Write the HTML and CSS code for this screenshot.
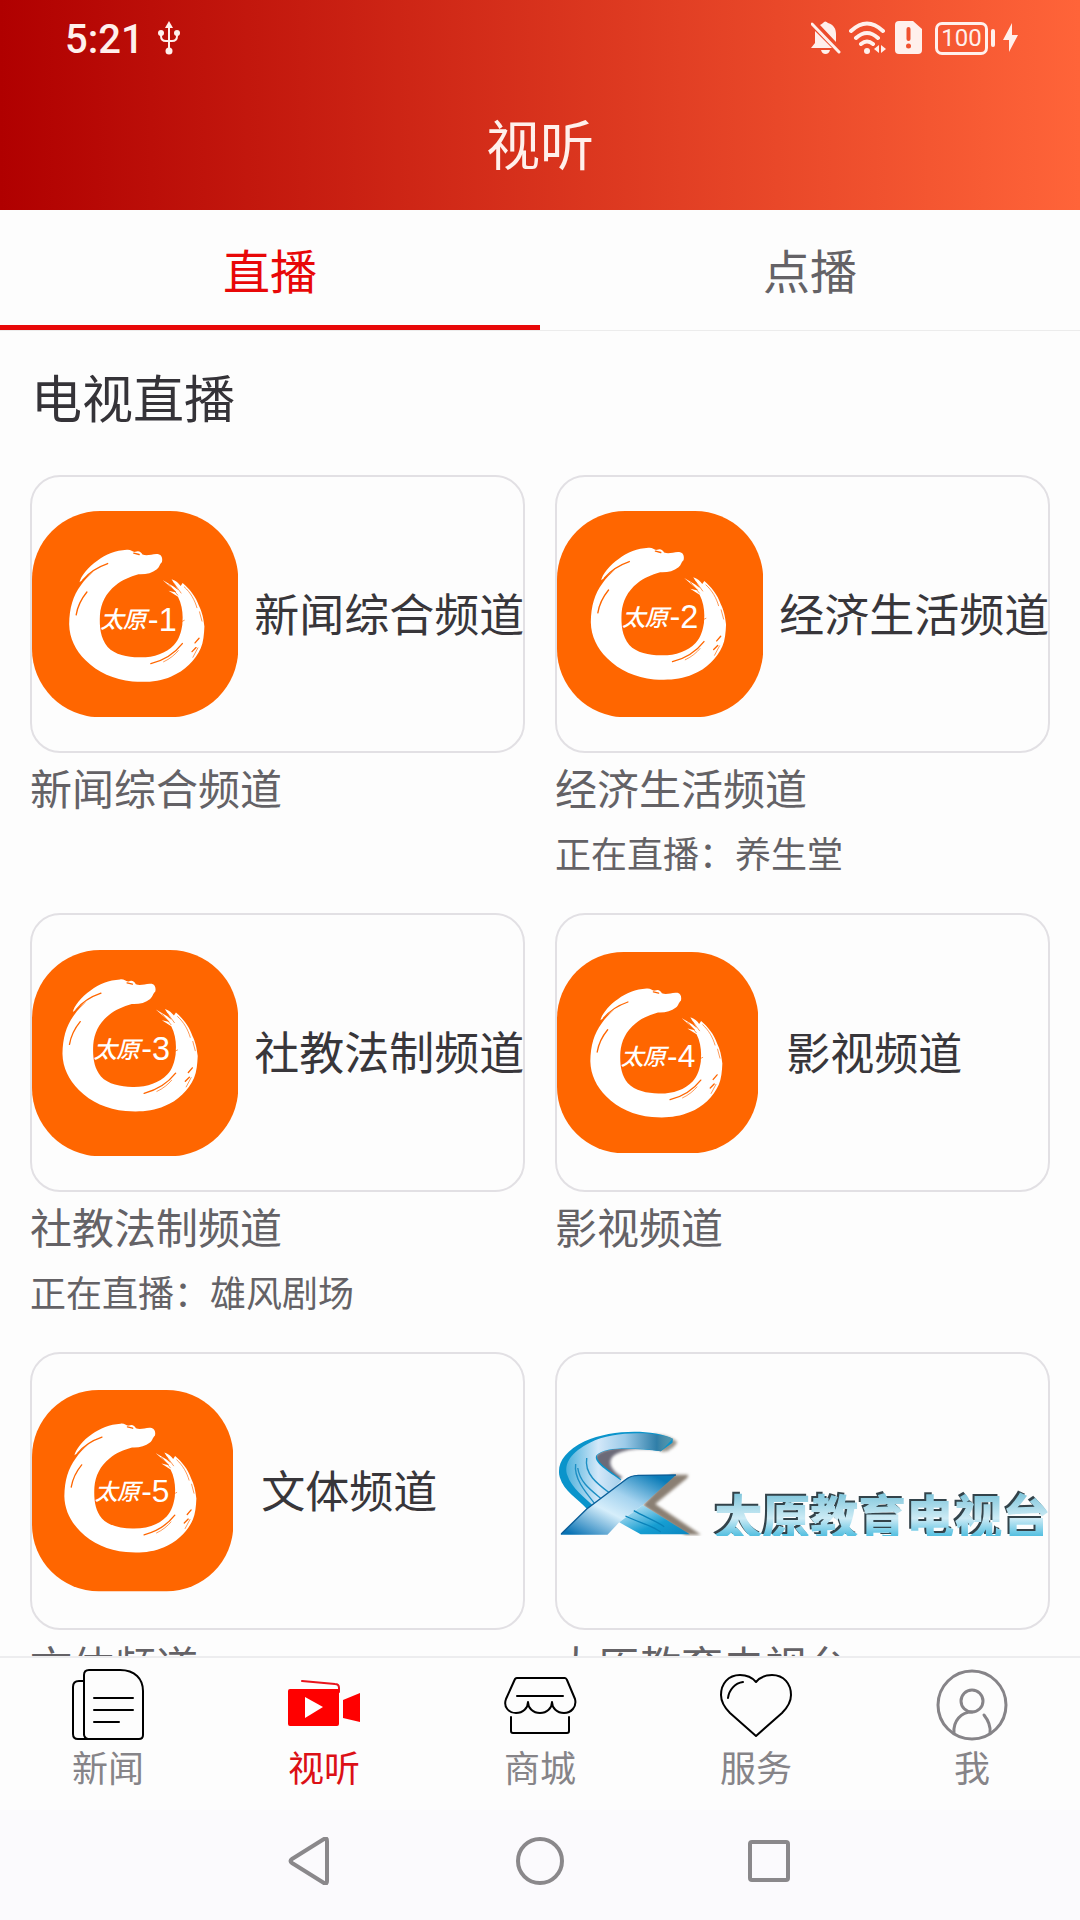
FILE: index.html
```html
<!DOCTYPE html>
<html lang="zh-CN">
<head>
    <meta charset="UTF-8">
    <meta name="viewport" content="width=device-width, initial-scale=1.0">
    <title>视听</title>
    <link rel="stylesheet" href="styles.css">
</head>
<body>
    <!-- Shared dragon ring for the channel logos -->
    <svg class="defs" aria-hidden="true">
        <symbol id="ring" viewBox="0 0 616 616" overflow="visible">
            <path fill="#fff" d="M283 116 C296 114 300 124 309 122 C318 117 326 122 330 130 C346 137 360 126 378 129 C388 131 391 143 388 153 C380 160 382 166 373 174 C358 186 340 190 318 189 C292 197 270 205 250 222 C220 246 206 276 203 310 C201 345 204 380 226 406 C248 430 290 438 325 437 C365 437 400 425 424 400 C440 384 446 360 449 340 L450 318 C450 298 446 275 436 256 L408 238 C420 240 428 244 431 242 L390 206 L424 226 L437 237 L417 204 C430 208 438 216 444 224 L450 215 C470 232 490 256 499 284 C508 302 512 320 515 345 C514 368 512 392 504 410 C488 446 456 478 416 494 C380 510 340 512 300 509 C244 504 196 482 160 446 C130 416 112 380 111 338 C112 290 122 254 146 222 C156 206 170 194 184 180 L142 213 C144 198 168 166 196 148 C220 130 250 118 283 116 Z"/>
            <path fill="none" stroke="#f60" stroke-width="4" stroke-linecap="round" d="M226 157 C200 166 170 184 152 206 M164 242 C146 264 136 286 132 310 M355 456 C394 446 424 428 449 396 M487 394 L499 380 M478 420 L490 408 M304 126 L320 130"/>
            <path fill="none" stroke="#f60" stroke-width="2" d="M392 451 C412 442 428 428 438 416 M408 218 L436 252 M424 216 L446 246 M454 226 C474 244 486 266 493 290 M500 300 L508 330 M480 438 L496 408 M444 332 L456 326"/>
        </symbol>
        <linearGradient id="blueC" x1="0" x2="1">
            <stop offset="0" stop-color="#4fb2dc"/>
            <stop offset="0.3" stop-color="#d3e8f9"/>
            <stop offset="0.55" stop-color="#9ccbe9"/>
            <stop offset="0.85" stop-color="#2f7ea8"/>
            <stop offset="1" stop-color="#8d9c98" stop-opacity="0.5"/>
        </linearGradient>
        <linearGradient id="blueX" x1="0" y1="1" x2="1" y2="0">
            <stop offset="0.05" stop-color="#0872b4"/>
            <stop offset="0.4" stop-color="#d6eefb"/>
            <stop offset="0.6" stop-color="#a5d3ef"/>
            <stop offset="0.9" stop-color="#0b7cb8"/>
        </linearGradient>
        <linearGradient id="blueLeg" x1="0" y1="0" x2="1" y2="1">
            <stop offset="0" stop-color="#e0f2fc"/>
            <stop offset="0.6" stop-color="#169ed2"/>
            <stop offset="1" stop-color="#0a86c0"/>
        </linearGradient>
    </svg>

    <header class="header">
        <div class="status-bar">
            <span class="time">5:21</span>
            <svg class="usb" width="22" height="34" viewBox="0 0 22 34" fill="none" stroke="currentColor" stroke-width="2">
                <path d="M11 4v26M3 12v3q0 5 5 5h6q5 0 5-5v-3"/>
                <path d="M11 0l4 7H7z" fill="currentColor" stroke="none"/>
                <circle cx="3" cy="12" r="3" fill="currentColor" stroke="none"/>
                <circle cx="19" cy="12" r="3" fill="currentColor" stroke="none"/>
                <circle cx="11" cy="30" r="3.5" fill="currentColor" stroke="none"/>
            </svg>
            <div class="status-icons">
                <svg width="30" height="34" viewBox="0 0 30 34" fill="currentColor">
                    <path d="M9 4q2-1 3-2 2-3 5 0c6 2 8 6 8 11v8zM4 10l17 17H0l4-5zM10 29h9q-1 4-4.500 4T10 29z"/>
                    <path d="M1 3l27 28" fill="none" stroke="currentColor" stroke-width="3" stroke-linecap="round"/>
                </svg>
                <svg width="38" height="34" viewBox="0 0 38 34" fill="currentColor">
                    <path d="M2 10q16-15 32 0M7 17q11-10 22 0M12 23q6-5 12 0" fill="none" stroke="currentColor" stroke-width="4" stroke-linecap="round"/>
                    <circle cx="18" cy="30" r="3"/>
                    <path d="M30 24v8l-5-4zM32 24v8l5-4z"/>
                </svg>
                <svg width="28" height="34" viewBox="0 0 28 34">
                    <path d="M4 0h14l9 8v21q0 4-4 4H4q-4 0-4-4V4q0-4 4-4z" fill="currentColor"/>
                    <path d="M13.500 8v10" stroke="#f0512f" stroke-width="4" stroke-linecap="round"/>
                    <circle cx="13.500" cy="25" r="2.500" fill="#f0512f"/>
                </svg>
                <span class="battery"><span class="battery-level">100</span></span>
                <svg width="16" height="30" viewBox="0 0 16 30" fill="currentColor">
                    <path d="M9 0v12h6L6 29V17H0z"/>
                </svg>
            </div>
        </div>
        <h1 class="page-title">视听</h1>
    </header>

    <div class="tabs" role="tablist">
        <button class="tab active" role="tab" aria-selected="true">直播</button>
        <button class="tab" role="tab" aria-selected="false">点播</button>
    </div>

    <main class="content">
        <h2 class="section-title">电视直播</h2>
        <div class="channels">
            <a class="channel" href="#">
                <div class="cover">
                    <svg class="logo" viewBox="0 0 616 616">
                        <rect width="616" height="616" rx="204" fill="#f60"/>
                        <g>
                            <use href="#ring" width="616" height="616"/>
                            <text class="logo-city" y="350"><tspan x="204">太</tspan><tspan x="272">原</tspan></text>
                            <text class="logo-number" x="346" y="357">-1</text>
                        </g>
                    </svg>
                    <span class="cover-name">新闻综合频道</span>
                </div>
                <h3 class="name">新闻综合频道</h3>
            </a>
            <a class="channel" href="#">
                <div class="cover">
                    <svg class="logo" viewBox="0 0 616 616">
                        <rect width="616" height="616" rx="204" fill="#f60"/>
                        <g transform="translate(-10 -6)">
                            <use href="#ring" width="616" height="616"/>
                            <text class="logo-city" y="350"><tspan x="204">太</tspan><tspan x="272">原</tspan></text>
                            <text class="logo-number" x="346" y="357">-2</text>
                        </g>
                    </svg>
                    <span class="cover-name">经济生活频道</span>
                </div>
                <h3 class="name">经济生活频道</h3>
                <p class="playing">正在直播：养生堂</p>
            </a>
            <a class="channel" href="#">
                <div class="cover">
                    <svg class="logo" viewBox="0 0 616 616">
                        <rect width="616" height="616" rx="204" fill="#f60"/>
                        <g transform="translate(-20 -28)">
                            <use href="#ring" width="616" height="616"/>
                            <text class="logo-city" y="350"><tspan x="204">太</tspan><tspan x="272">原</tspan></text>
                            <text class="logo-number" x="346" y="357">-3</text>
                        </g>
                    </svg>
                    <span class="cover-name">社教法制频道</span>
                </div>
                <h3 class="name">社教法制频道</h3>
                <p class="playing">正在直播：雄风剧场</p>
            </a>
            <a class="channel" href="#">
                <div class="cover cover-short">
                    <svg class="logo" viewBox="0 0 616 616">
                        <rect width="616" height="616" rx="204" fill="#f60"/>
                        <g transform="translate(-9 -4)">
                            <use href="#ring" width="616" height="616"/>
                            <text class="logo-city" y="350"><tspan x="204">太</tspan><tspan x="272">原</tspan></text>
                            <text class="logo-number" x="346" y="357">-4</text>
                        </g>
                    </svg>
                    <span class="cover-name">影视频道</span>
                </div>
                <h3 class="name">影视频道</h3>
            </a>
            <a class="channel" href="#">
                <div class="cover cover-short">
                    <svg class="logo" viewBox="0 0 616 616">
                        <rect width="616" height="616" rx="204" fill="#f60"/>
                        <g transform="translate(-12 -13)">
                            <use href="#ring" width="616" height="616"/>
                            <text class="logo-city" y="350"><tspan x="204">太</tspan><tspan x="272">原</tspan></text>
                            <text class="logo-number" x="346" y="357">-5</text>
                        </g>
                    </svg>
                    <span class="cover-name">文体频道</span>
                </div>
                <h3 class="name">文体频道</h3>
            </a>
            <a class="channel" href="#">
                <div class="cover cover-edu">
                    <svg class="logo-edu" viewBox="50 266 426 318" preserveAspectRatio="none">
                        <g class="soft">
                            <path fill="#6b6a78" d="M372 330 C300 316 240 322 212 345 C194 365 210 390 240 408 L214 424 C180 392 150 360 164 340 C190 316 260 310 372 324z"/>
                            <path fill="#8a7f73" d="M380 400h48q4 6-6 14l-88 74 132 92h-44L298 492z"/>
                            <path fill="#9a958c" d="M330 278q50 6 68 24-8 20-40 30l-20-8z"/>
                        </g>
                        <path fill="#0a94cb" d="M385 292 C330 264 210 262 130 300 C70 330 48 370 58 408 C70 450 110 472 136 502 L160 498 L236 414 C210 392 160 360 166 342 C190 316 280 320 350 330 L384 304z"/>
                        <path fill="url(#blueC)" d="M385 292 C330 270 215 268 145 304 C92 332 68 366 80 402 C92 440 130 470 160 498 L236 418 C200 392 152 362 164 342 C190 314 280 318 350 330z"/>
                        <path fill="none" stroke="#1c8fc4" stroke-width="4" d="M104 368 C98 410 130 450 160 488 M136 350 C128 400 170 430 206 458 M110 380 C116 424 150 448 180 474"/>
                        <path fill="url(#blueX)" d="M60 580 L136 503 L250 414 Q262 403 285 402 L394 401 L298 491 L230 543 L196 580z"/>
                        <path fill="none" stroke="#0b5e98" stroke-width="4" d="M62 578 L136 503 L250 414 Q262 403 285 402 L394 401"/>
                        <path fill="url(#blueLeg)" d="M298 491 L434 579 H292 L230 543z"/>
                        <path fill="none" stroke="#0a83ba" stroke-width="4" d="M248 524 C290 545 320 550 350 572 M272 508 C300 525 340 540 360 556"/>
                    </svg>
                    <span class="edu-name">太原教育电视台</span>
                </div>
                <h3 class="name">太原教育电视台</h3>
            </a>
        </div>
    </main>

    <nav class="nav">
        <a class="nav-item" href="#">
            <svg class="nav-icon dark" viewBox="0 0 72 72">
                <path d="M12 67V7q0-5 5-5h31c15 0 23 9 23 21v44q0 4-4 4H6q-5 0-5-5V19q0-6 6-6h5M12 66q0 4 4 5M22 30h39M22 42h39M22 54h25"/>
            </svg>
            新闻
        </a>
        <a class="nav-item active" href="#">
            <svg class="nav-icon" viewBox="0 0 72 72">
                <path d="M14 13L47 16q4 0 4 4v4" stroke="#e8141c"/>
                <path d="M2 21h48q1 0 1 2v33q0 2-2 2H2q-2 0-2-2V23q0-2 2-2zM55 32l17-7v29l-17-4z" fill="#f00" stroke="none"/>
                <path d="M17 29l18 10-18 11z" fill="#fff" stroke="none"/>
            </svg>
            视听
        </a>
        <a class="nav-item" href="#">
            <svg class="nav-icon dark" viewBox="0 0 72 72">
                <path d="M13 10h48q1 0 2 2l8 19c2 8-4 14-11 14s-12-5-12-11c0 6-5 11-12 11s-12-5-12-11c0 6-5 11-12 11S-1 39 2 31l9-20q1-1 2-1zM13 28h46M7 49v14q0 2 2 2h54q2 0 2-2V49"/>
            </svg>
            商城
        </a>
        <a class="nav-item" href="#">
            <svg class="nav-icon dark" viewBox="0 0 72 72">
                <path d="M36 14C31 8 25 7 20 7 8 7 1 16 1 27c0 7 4 13 9 18l26 23 26-23c5-5 9-11 9-18C71 16 64 7 52 7c-5 0-11 1-16 7zM8 30c1-8 7-15 15-16"/>
            </svg>
            服务
        </a>
        <a class="nav-item" href="#">
            <svg class="nav-icon me" viewBox="0 0 72 72">
                <circle cx="36" cy="37" r="34"/>
                <circle cx="36" cy="33" r="11"/>
                <path d="M18 65C17 53 25 44 36 44M48 47c4 5 7 10 6 18"/>
            </svg>
            我
        </a>
    </nav>

    <footer class="system-bar">
        <button class="system-key" aria-label="返回">
            <svg width="48" height="48" viewBox="0 0 48 48"><path d="M38 2Q41 0 41 4v40q0 4-3 2L6 26q-3-2 0-4z"/></svg>
        </button>
        <button class="system-key" aria-label="主页">
            <svg width="48" height="48" viewBox="0 0 48 48"><circle cx="24" cy="24" r="22"/></svg>
        </button>
        <button class="system-key" aria-label="最近任务">
            <svg width="48" height="48" viewBox="0 0 48 48"><rect x="4" y="5" width="38" height="38" rx="2"/></svg>
        </button>
    </footer>
</body>
</html>
```
FILE: styles.css
```css
* {
    margin: 0;
    padding: 0;
    box-sizing: border-box;
}

body {
    display: flex;
    flex-direction: column;
    height: 100vh;
    font-family: "Noto Sans CJK SC", sans-serif;
    background: #fdfdfd;
    color: #646266;
    overflow: hidden;
}

a {
    color: inherit;
    text-decoration: none;
}

button {
    font: inherit;
    color: inherit;
    background: none;
    border: none;
    cursor: pointer;
}

svg {
    display: block;
    flex-shrink: 0;
}

.defs {
    position: absolute;
    width: 0;
    height: 0;
}

/* Header */
.header {
    flex-shrink: 0;
    background: linear-gradient(90deg, #b00000, #ff6439);
    color: #fff0ec;
}

.status-bar {
    display: flex;
    align-items: center;
    height: 76px;
    padding: 0 61px 0 65px;
}

.time {
    padding-top: 4px;
    font-family: Roboto, sans-serif;
    font-size: 40px;
    line-height: 48px;
    font-weight: 500;
}

.usb {
    margin-left: 14px;
}

.status-icons {
    display: flex;
    align-items: center;
    gap: 8px;
    margin-left: auto;
}

.battery {
    display: flex;
    align-items: center;
    gap: 3px;
    margin-left: 4px;
}

.battery::after {
    content: "";
    width: 4px;
    height: 18px;
    border-radius: 2px;
    background: currentColor;
}

.battery-level {
    width: 53px;
    border: 3px solid currentColor;
    border-radius: 7px;
    font-family: Roboto, sans-serif;
    font-size: 24px;
    line-height: 27px;
    text-align: center;
}

.page-title {
    height: 134px;
    font-size: 54px;
    line-height: 134px;
    font-weight: 400;
    text-align: center;
}

/* Tabs */
.tabs {
    display: flex;
    flex-shrink: 0;
    border-bottom: 1px solid #ececec;
}

.tab {
    flex: 1;
    height: 120px;
    padding-top: 2px;
    border-bottom: 5px solid transparent;
    font-size: 47px;
    line-height: 60px;
}

.tab.active {
    color: #e80808;
    border-bottom-color: #e80808;
}

/* Channel list */
.content {
    flex: 1;
    min-height: 0;
    padding: 29px 30px;
    overflow-y: auto;
    scrollbar-width: none;
}

.section-title {
    margin-bottom: 43px;
    padding-left: 1px;
    font-size: 51px;
    line-height: 72px;
    font-weight: 400;
    color: #353338;
}

.channels {
    display: grid;
    grid-template-columns: 1fr 1fr;
    gap: 37px 30px;
}

.channel {
    min-width: 0;
}

.cover {
    display: flex;
    align-items: center;
    gap: 16px;
    aspect-ratio: 16 / 9;
    border: 2px solid #e2e0e4;
    border-radius: 30px;
    overflow: hidden;
    white-space: nowrap;
}

.logo {
    width: 42%;
}

.logo-city {
    font-size: 70px;
    font-weight: 500;
    font-style: italic;
    fill: #fff;
}

.logo-number {
    font-family: "Liberation Sans", sans-serif;
    font-size: 97px;
    fill: #fff;
}

.cover-name {
    padding-bottom: 4px;
    font-size: 45px;
    color: #38363a;
}

.cover-short {
    gap: 28px;
}

.cover-short .logo {
    width: 41%;
}

.cover-short .cover-name {
    font-size: 44px;
}

.cover-edu {
    align-items: flex-end;
    gap: 10px;
    padding-bottom: 92px;
}

.logo-edu {
    width: 30%;
    height: 106px;
}

.soft {
    filter: blur(4px);
}

.edu-name {
    font-size: 48px;
    line-height: 44px;
    font-weight: 900;
    color: transparent;
    background: linear-gradient(#7cc4da, #cdebf5 60%, #53bfe0);
    background-clip: text;
    filter: drop-shadow(-2px -2px 0 #33434a);
}

.name {
    margin-top: 4px;
    font-size: 42px;
    line-height: 60px;
    font-weight: 400;
}

.playing {
    margin-top: 11px;
    font-size: 36px;
    line-height: 48px;
}

/* Bottom navigation */
.nav {
    display: flex;
    flex-shrink: 0;
    border-top: 2px solid #ededef;
    background: #fdfdfd;
    color: #868488;
}

.nav-item {
    flex: 1;
    display: flex;
    flex-direction: column;
    align-items: center;
    height: 152px;
    padding-top: 10px;
    font-size: 36px;
    line-height: 52px;
}

.nav-item.active {
    color: #dc1016;
}

.nav-icon {
    width: 72px;
    height: 72px;
    overflow: visible;
    fill: none;
    stroke: currentColor;
    stroke-width: 2;
    stroke-linecap: round;
    stroke-linejoin: round;
}

.nav-icon.dark {
    stroke: #000;
}

.nav-icon.me {
    stroke-width: 3;
}

/* System keys */
.system-bar {
    display: flex;
    flex-shrink: 0;
    justify-content: center;
    align-items: center;
    gap: 182px;
    height: 110px;
    padding-bottom: 8px;
    background: #fbfafd;
}

.system-key svg {
    fill: none;
    stroke: #8a888b;
    stroke-width: 4;
    stroke-linejoin: round;
}
```
